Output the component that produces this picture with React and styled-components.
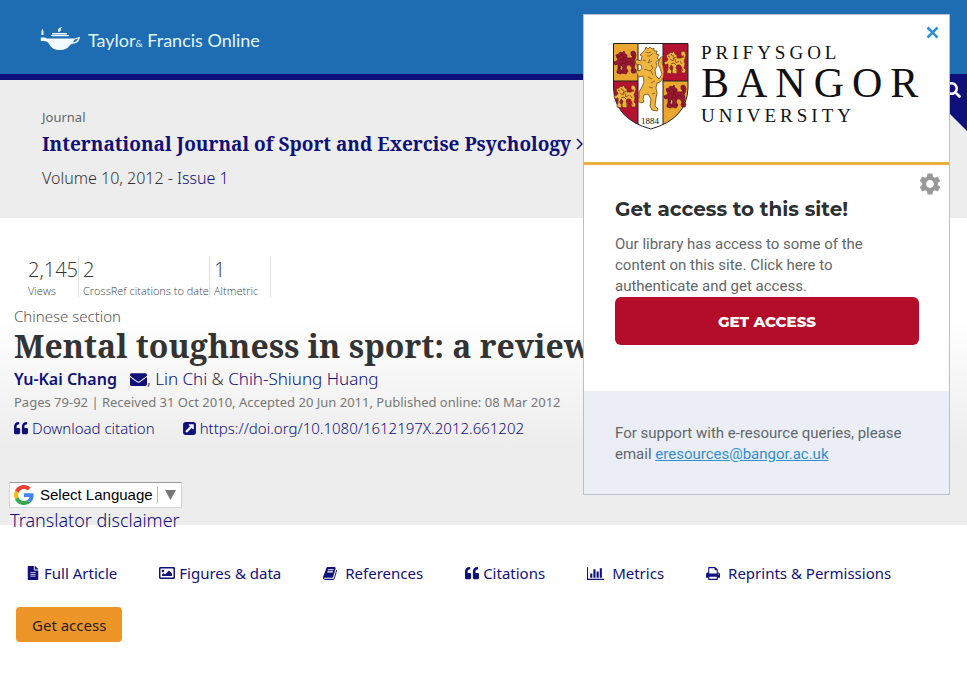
import React, { useState } from "react";
import styled, { createGlobalStyle } from "styled-components";
import {
  FaEnvelope,
  FaFileAlt,
  FaQuoteLeft,
  FaRegImage,
  FaSearch,
} from "react-icons/fa";
import { MdSettings } from "react-icons/md";

const navy = "#10107a";
const serif = `"Noto Serif", "DejaVu Serif Condensed", "DejaVu Serif", serif`;
const sans = `"Noto Sans", "Open Sans", sans-serif`;

const GlobalStyle = createGlobalStyle`
  * {
    box-sizing: border-box;
  }

  body {
    margin: 0;
    background: #fff;
    color: #333;
    font-family: ${sans};
    font-size: 16px;
    font-weight: 300;
  }

  a {
    color: ${navy};
    text-decoration: none;
  }

  h1, h2, p {
    margin: 0;
  }
`;

const Header = styled.header`
  position: relative;
  display: flex;
  align-items: center;
  height: 80px;
  padding: 0 40px;
  background: #1e6db3;
  border-bottom: 6px solid ${navy};
`;

const Brand = styled.a`
  display: flex;
  align-items: center;
  gap: 8px;
  padding-top: 8px;
  color: #e2f5ff;
  font-family: Lato, sans-serif;
  font-size: 18px;
  font-weight: 400;
  line-height: 24px;

  svg {
    margin-bottom: 4px;
  }

  small {
    font-size: 10px;
  }
`;

const SearchCorner = styled.button`
  position: absolute;
  top: 74px;
  right: 0;
  display: flex;
  justify-content: flex-end;
  align-items: flex-start;
  width: 57px;
  height: 57px;
  padding: 8px 6px 0 0;
  border: none;
  background: ${navy};
  clip-path: polygon(0 0, 100% 0, 100% 100%);
  color: #fff;
  font-size: 16px;
  cursor: pointer;
`;

const JournalBanner = styled.section`
  height: 138px;
  padding: 27px 42px 0;
  background: #ededed;
`;

const JournalLabel = styled.p`
  color: #666;
  font-size: 13px;
  font-weight: 400;
  line-height: 20px;
`;

const JournalTitle = styled.h2`
  font-family: ${serif};
  font-size: 19px;
  font-weight: 700;
  line-height: 34px;
  white-space: nowrap;

  a {
    display: flex;
    align-items: center;
    gap: 5px;
  }
`;

const Volume = styled.p`
  font-size: 16px;
  line-height: 34px;
`;

const ArticleHead = styled.section`
  height: 307px;
  padding: 38px 14px 0;
  background: linear-gradient(#fff 100px, #ededed 228px);
`;

const Stats = styled.ul`
  display: flex;
  margin: 0 0 8px;
  padding: 0 0 0 10px;
  font-family: "Open Sans", sans-serif;
  list-style: none;
`;

const Stat = styled.li`
  display: flex;
  flex-direction: column;
  padding-left: 4px;
  border-right: 1px solid #ddd;
  color: #444;
  font-size: 11px;
  line-height: 13px;

  strong {
    color: #333;
    font-size: 20px;
    font-weight: 300;
    line-height: 28px;
  }

  &:last-child {
    min-width: 61px;
  }
`;

const SectionName = styled.p`
  color: #555;
  font-size: 15px;
  line-height: 22px;
`;

const ArticleTitle = styled.h1`
  font-family: ${serif};
  font-size: 32px;
  font-weight: 700;
  line-height: 38px;
  white-space: nowrap;
`;

const Authors = styled.p`
  display: flex;
  align-items: center;
  font-size: 17px;
  line-height: 28px;
  white-space: pre;
`;

const LeadAuthor = styled.a`
  margin-right: 13px;
  font-size: 16px;
  font-weight: 600;
`;

const Mail = styled.a`
  display: flex;
`;

const Dates = styled.p`
  color: #777;
  font-size: 13px;
  font-weight: 400;
  line-height: 19px;
`;

const ArticleLinks = styled.div`
  display: flex;
  gap: 28px;
  padding-top: 3px;
  font-size: 15px;
  line-height: 26px;
`;

const IconLink = styled.a`
  display: flex;
  align-items: center;
  gap: 4px;
`;

const Translate = styled.div`
  display: flex;
  flex-direction: column;
  align-items: flex-start;
  margin: 41px 0 0 -4px;
  font-size: 18px;
  line-height: 25px;
`;

const Language = styled.label`
  position: relative;
  display: flex;
  align-items: center;
  height: 26px;
  margin-left: -1px;
  padding-left: 4px;
  border: 1px solid #d5d5d5;
  border-top-color: #9b9b9b;
  background: #fff;
`;

const LanguageSelect = styled.select`
  width: 147px;
  height: 24px;
  padding: 0 0 2px 6px;
  border: none;
  appearance: none;
  background: transparent;
  color: #000;
  font-family: "Liberation Sans", Arial, sans-serif;
  font-size: 15px;
  cursor: pointer;
`;

const LanguageArrow = styled.span`
  position: absolute;
  right: 5px;
  display: flex;
  align-items: center;
  height: 16px;
  padding-left: 7px;
  border-left: 1px solid #bbb;
  pointer-events: none;
`;

const Tabs = styled.nav`
  display: flex;
  gap: 42px;
  padding: 36px 26px 0;
  font-size: 15px;
  font-weight: 400;
  line-height: 24px;
  white-space: nowrap;
`;

const Tab = styled.a`
  display: flex;
  align-items: center;
  gap: ${({ $wide }) => ($wide ? "8px" : "4px")};
`;

const AccessButton = styled.button`
  margin: 22px 16px;
  padding: 0 16px;
  height: 35px;
  border: none;
  border-radius: 4px;
  background: #ee9529;
  color: #222;
  font: 400 15px ${sans};
  cursor: pointer;
`;

const Popup = styled.aside`
  position: fixed;
  top: 14px;
  right: 17px;
  width: 367px;
  border: 1px solid #b9bfd0;
  background: #fff;
  color: #5f6769;
  font-family: Roboto, sans-serif;
  font-size: 15px;
  font-weight: 400;
  line-height: 21px;
`;

const PopupHeader = styled.div`
  height: 150px;
  padding: 28px 0 0 29px;
  border-bottom: 3px solid #e9b040;
`;

const PopupBody = styled.div`
  height: 226px;
  padding: 31px 30px 0 31px;
`;

const PopupTitle = styled.h2`
  padding-bottom: 12px;
  color: #2b2f30;
  font-family: Montserrat, Inter, sans-serif;
  font-size: 20px;
  font-weight: 700;
  line-height: 26px;
`;

const PopupText = styled.p`
  max-width: 280px;
`;

const PopupAction = styled.button`
  width: 100%;
  height: 48px;
  border: none;
  border-radius: 6px;
  background: #b30d29;
  color: #fff;
  font: 800 15px Montserrat, Inter, sans-serif;
  cursor: pointer;
`;

const PopupFooter = styled.div`
  padding: 32px 31px 29px;
  background: #ebeef7;

  a {
    color: #2f8fd0;
    text-decoration: underline;
  }
`;

const CornerButton = styled.button`
  position: absolute;
  top: ${({ $top }) => $top}px;
  right: ${({ $right }) => $right}px;
  display: flex;
  padding: 0;
  border: none;
  background: none;
  color: ${({ $color }) => $color};
  font-size: 26px;
  cursor: pointer;
`;

const Crest = styled.svg`
  display: block;

  text {
    font-family: "Liberation Serif", serif;
    fill: #111;
  }
`;

const Wordmark = styled.text`
  font-size: ${({ $big }) => ($big ? 42 : 19)}px;
  letter-spacing: ${({ $big }) => ($big ? 8 : 4)}px;
`;

const Glyph = ({ d, width, size }) => (
  <svg
    width={Math.round((size * width) / 1792)}
    height={size}
    viewBox={`0 0 ${width} 1792`}
    fill="currentColor"
    aria-hidden="true"
  >
    <path d={d} />
  </svg>
);

const BookIcon = () => (
  <Glyph
    width={1664}
    size={15}
    d="M1639 478q40 57 18 129l-275 906q-19 64-76.5 107.5t-122.5 43.5h-923q-77 0-148.5-53.5t-99.5-131.5q-24-67-2-127 0-4 3-27t4-37q1-8-3-21.5t-3-19.5q2-11 8-21t16.5-23.5 16.5-23.5q23-38 45-91.5t30-91.5q3-10 .5-30t-.5-28q3-11 17-28t17-23q21-36 42-92t25-90q1-9-2.5-32t.5-28q4-13 22-30.5t22-22.5q19-26 42.5-84.5t27.5-96.5q1-8-3-25.5t-2-26.5q2-8 9-18t18-23 17-21q8-12 16.5-30.5t15-35 16-36 19.5-32 26.5-23.5 36-11.5 47.5 5.5l-1 3q38-9 51-9h761q74 0 114 56t18 130l-274 906q-36 119-71.5 153.5t-128.5 34.5h-869q-27 0-38 15-11 16-1 43 24 70 144 70h923q29 0 56-15.5t35-41.5l300-987q7-22 5-57 38 15 59 43zM575 480q-4 13 2 22.5t20 9.5h608q13 0 25.5-9.5t16.5-22.5l21-64q4-13-2-22.5t-20-9.5h-608q-13 0-25.5 9.5t-16.5 22.5zM492 736q-4 13 2 22.5t20 9.5h608q13 0 25.5-9.5t16.5-22.5l21-64q4-13-2-22.5t-20-9.5h-608q-13 0-25.5 9.5t-16.5 22.5z"
  />
);

const ChartIcon = () => (
  <Glyph
    width={2048}
    size={15}
    d="M640 896v512h-256v-512h256zM1024 384v1024h-256v-1024h256zM2048 1536v128h-2048v-1536h128v1408h1920zM1408 640v768h-256v-768h256zM1792 256v1152h-256v-1152h256z"
  />
);

const PrintIcon = () => (
  <Glyph
    width={1664}
    size={15}
    d="M384 1536h896v-256h-896v256zM384 896h896v-384h-160q-40 0-68-28t-28-68v-160h-640v640zM1536 960q0-26-19-45t-45-19-45 19-19 45 19 45 45 19 45-19 19-45zM1664 960v416q0 13-9.5 22.5t-22.5 9.5h-224v160q0 40-28 68t-68 28h-960q-40 0-68-28t-28-68v-160h-224q-13 0-22.5-9.5t-9.5-22.5v-416q0-79 56.5-135.5t135.5-56.5h64v-544q0-40 28-68t68-28h672q40 0 88 20t76 48l152 152q28 28 48 76t20 88v256h64q79 0 135.5 56.5t56.5 135.5z"
  />
);

const ExternalIcon = () => (
  <Glyph
    width={1536}
    size={15}
    d="M1280 928v-480q0-26-19-45t-45-19h-480q-42 0-59 39-17 41 14 70l144 144-534 534q-19 19-19 45t19 45l102 102q19 19 45 19t45-19l534-534 144 144q18 19 45 19 12 0 25-5 39-17 39-59zM1536 416v960q0 119-84.5 203.5t-203.5 84.5h-960q-119 0-203.5-84.5t-84.5-203.5v-960q0-119 84.5-203.5t203.5-84.5h960q119 0 203.5 84.5t84.5 203.5z"
  />
);

const LampIcon = () => (
  <svg width="40" height="24" viewBox="0 0 40 24" fill="#f2fbff" aria-hidden="true">
    <path d="M2.4 1.5q1.4 2 1.2 6.5H1.4Q1 4 2.4 1.5zM.8 10.5h4.6l1 1H35l5-1.8q-.3 6-5.8 6.8-3.6-.2-5 2.6-2.8 3.9-9 3.9-8 0-10.8-5.6-1.5-3.2-5.6-3.4H.8z" />
    <path d="M12.5 9.2q-1.5-.1-1.5-1.3h18q0 1.2-1.5 1.3zM12 6h15v1.4H12zM18.6 5.2q-1.6-2.8 1-4.4Q21 0 22.4.2q-2.6 1.4-1.6 2.8-.1 1.6-2.2 2.2z" />
    <path d="M33 15.2q.8-3 5-3.8-1 3.6-5 3.8z" fill="#1e6db3" />
  </svg>
);

const GoogleIcon = () => (
  <svg width="20" height="20" viewBox="0 0 48 48" aria-hidden="true">
    <path fill="#ea4335" d="M24 9.5c3.54 0 6.71 1.22 9.21 3.6l6.85-6.85C35.9 2.38 30.47 0 24 0 14.62 0 6.51 5.38 2.56 13.22l7.98 6.19C12.43 13.72 17.74 9.5 24 9.5z" />
    <path fill="#4285f4" d="M46.98 24.55c0-1.57-.15-3.09-.38-4.55H24v9.02h12.94c-.58 2.96-2.26 5.48-4.78 7.18l7.73 6c4.51-4.18 7.09-10.36 7.09-17.65z" />
    <path fill="#fbbc05" d="M10.53 28.59c-.48-1.45-.76-2.99-.76-4.59s.27-3.14.76-4.59l-7.98-6.19C.92 16.46 0 20.12 0 24c0 3.88.92 7.54 2.56 10.78l7.97-6.19z" />
    <path fill="#34a853" d="M24 48c6.48 0 11.93-2.13 15.89-5.81l-7.73-6c-2.15 1.45-4.92 2.3-8.16 2.3-6.26 0-11.57-4.22-13.47-9.91l-7.98 6.19C6.51 42.62 14.62 48 24 48z" />
  </svg>
);

const Lion = ({ x, y, fill, line }) => (
  <g transform={`translate(${x} ${y})`} stroke={line} strokeWidth=".7">
    <path
      fill={fill}
      d="M1 7L0 4l3-1 1-2 2 1 2-2 1 3 2 1 0 3 4 0 2-1-2-2 0-3 2-1 2 1 1 3-1 4-1 1 1 4-1 4 2 2-1 3-3 0-1-2 1-3-2-3-3 0-1 3 2 3-2 3-4-1 0-2 1-4-2-2-1 4 2 2-1 3-4-1 0-2 1-2 0-5-3 1-1-3 3-1 1-2z"
    />
    <path
      fill="none"
      d="M2 5l2 1M5 3l1 2 2 0M4 8l3 2 1-4M9 8l1 4 3-2M5 13l3-1 2 2M14 10l2 3M17 4l1 3M3 17l2-1M10 19l1 2M16 18l1 2M7 8l3-2"
    />
  </g>
);

const BangorLogo = () => (
  <Crest width="320" height="90" viewBox="0 0 320 90" role="img" aria-label="Prifysgol Bangor University">
    <defs>
      <clipPath id="shield">
        <path d="M.5.5H75V45Q74 76 37.8 86 1.5 76 .5 45z" />
      </clipPath>
    </defs>
    <g clipPath="url(#shield)">
      <path fill="#e9a72f" d="M0 0h25v38H0zM50 38h26v50H50z" />
      <path fill="#b31230" d="M50 0h26v38H50zM0 38h25v50H0z" />
      <path fill="#fff" d="M25 0h25v88H25z" />
      <path fill="none" stroke="#222" d="M25 0v88M50 0v88M0 38h25M50 38h26" />
    </g>
    <path fill="none" stroke="#222" d="M.5.5H75V45Q74 76 37.8 86 1.5 76 .5 45z" />
    <Lion x={3} y={8} fill="#9c1730" line="#5a1020" />
    <Lion x={53} y={8} fill="#efb53f" line="#6b2815" />
    <Lion x={3} y={42} fill="#efb53f" line="#6b2815" />
    <Lion x={53} y={42} fill="#9c1730" line="#5a1020" />
    <path
      fill="#efb53f"
      stroke="#6e4a14"
      strokeWidth=".8"
      strokeLinejoin="round"
      d="M32 7l1-3 2 2 2-2 2 2 2-1 0 3 3 0-1 3 3 1-2 3 2 2-3 2 1 4-2 4 1 6 3 3 3-5-2-6-2-4 2-6 3-2-1 6 1 4 1 6-1 6-3 4-3 1-1 5 1 5-1 5-1 8 3 3-1 2-5-1-2-4 1-7-3-5-4 1-1 4 1 3-3 1-3-2 1-3 0-6 3-5 2-5-1-6-4 1-2-3-1-4 3 1 3-2-1-4-5-1-1-4 3 0 3 1 1-5-2-1z"
    />
    <path
      fill="none"
      stroke="#6e4a14"
      strokeWidth=".7"
      d="M33 9l2 1 3-1M34 13l3 0 3-3M37 16l-2 4 4-2M38 22l2 3-3 3M34 27l4 1 2 4M35 34l4 2M38 40l4-2M36 44l4 1M39 51l3-1M33 18l-3-1M31 26l3 1"
    />
    <text x="28" y="81" fontSize="9">1884</text>
    <Wordmark x="88" y="16">PRIFYSGOL</Wordmark>
    <Wordmark x="88" y="54" $big>BANGOR</Wordmark>
    <Wordmark x="88" y="79">UNIVERSITY</Wordmark>
  </Crest>
);

const tabs = [
  { name: "Full Article", icon: <FaFileAlt size={14} /> },
  { name: "Figures & data", icon: <FaRegImage size={16} /> },
  { name: "References", icon: <BookIcon />, wide: true },
  { name: "Citations", icon: <FaQuoteLeft size={14} /> },
  { name: "Metrics", icon: <ChartIcon />, wide: true },
  { name: "Reprints & Permissions", icon: <PrintIcon />, wide: true },
];

const stats = [
  { value: "2,145", label: "Views" },
  { value: "2", label: "CrossRef citations to date" },
  { value: "1", label: "Altmetric" },
];

const AccessPopup = ({ onClose }) => (
  <Popup>
    <PopupHeader>
      <BangorLogo />
    </PopupHeader>
    <CornerButton $top={11} $right={10} $color="#2f8fd0" aria-label="Close" onClick={onClose}>
      <svg width="13" height="13" viewBox="0 0 13 13" stroke="currentColor" strokeWidth="2.5">
        <path d="M1.5 1.5l10 10M11.5 1.5l-10 10" />
      </svg>
    </CornerButton>
    <CornerButton $top={156} $right={6} $color="#999" aria-label="Settings">
      <MdSettings />
    </CornerButton>
    <PopupBody>
      <PopupTitle>Get access to this site!</PopupTitle>
      <PopupText>
        Our library has access to some of the content on this site. Click here
        to authenticate and get access.
      </PopupText>
      <PopupAction>GET ACCESS</PopupAction>
    </PopupBody>
    <PopupFooter>
      For support with e-resource queries, please email{" "}
      <a href="mailto:eresources@bangor.ac.uk">eresources@bangor.ac.uk</a>
    </PopupFooter>
  </Popup>
);

const App = () => {
  const [popupOpen, setPopupOpen] = useState(true);

  return (
    <>
      <GlobalStyle />
      <Header>
        <Brand href="#home">
          <LampIcon />
          <span>
            Taylor<small>&amp;</small> Francis Online
          </span>
        </Brand>
        <SearchCorner aria-label="Search">
          <FaSearch />
        </SearchCorner>
      </Header>

      <JournalBanner>
        <JournalLabel>Journal</JournalLabel>
        <JournalTitle>
          <a href="#journal">
            International Journal of Sport and Exercise Psychology
            <svg width="7" height="12" viewBox="0 0 7 12" fill="none" stroke="currentColor" strokeWidth="1.5">
              <path d="M1 1l5 5-5 5" />
            </svg>
          </a>
        </JournalTitle>
        <Volume>
          Volume 10, 2012 - <a href="#issue">Issue 1</a>
        </Volume>
      </JournalBanner>

      <main>
        <ArticleHead>
          <Stats>
            {stats.map((stat) => (
              <Stat key={stat.label}>
                <strong>{stat.value}</strong>
                {stat.label}
              </Stat>
            ))}
          </Stats>
          <SectionName>Chinese section</SectionName>
          <ArticleTitle>Mental toughness in sport: a review</ArticleTitle>
          <Authors>
            <LeadAuthor href="#chang">Yu-Kai Chang</LeadAuthor>
            <Mail href="#mail" aria-label="Email the author">
              <FaEnvelope />
            </Mail>
            <span>, </span>
            <a href="#chi">Lin Chi</a>
            <span> &amp; </span>
            <a href="#huang">Chih-Shiung Huang</a>
          </Authors>
          <Dates>
            Pages 79-92 | Received 31 Oct 2010, Accepted 20 Jun 2011, Published
            online: 08 Mar 2012
          </Dates>
          <ArticleLinks>
            <IconLink href="#citation">
              <FaQuoteLeft size={14} />
              Download citation
            </IconLink>
            <IconLink href="#doi">
              <ExternalIcon />
              https://doi.org/10.1080/1612197X.2012.661202
            </IconLink>
          </ArticleLinks>
          <Translate>
            <Language>
              <GoogleIcon />
              <LanguageSelect aria-label="Select Language">
                <option>Select Language</option>
              </LanguageSelect>
              <LanguageArrow>
                <svg width="11" height="10" viewBox="0 0 11 10" fill="#767676">
                  <path d="M0 0h11L5.5 10z" />
                </svg>
              </LanguageArrow>
            </Language>
            <a href="#disclaimer">Translator disclaimer</a>
          </Translate>
        </ArticleHead>

        <Tabs>
          {tabs.map((tab) => (
            <Tab key={tab.name} href="#tab" $wide={tab.wide}>
              {tab.icon}
              {tab.name}
            </Tab>
          ))}
        </Tabs>
        <AccessButton>Get access</AccessButton>
      </main>

      {popupOpen && <AccessPopup onClose={() => setPopupOpen(false)} />}
    </>
  );
};

export default App;
